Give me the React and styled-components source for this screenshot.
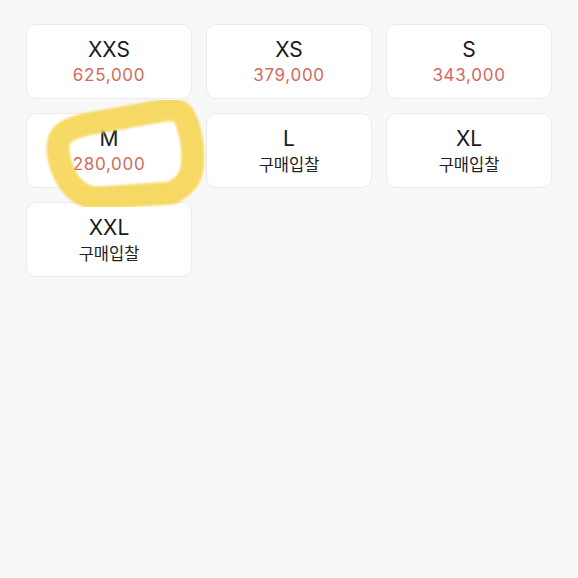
import React from "react";
import styled, { createGlobalStyle } from "styled-components";

const Global = createGlobalStyle`
  html, body { margin: 0; padding: 0; background: #f8f8f8; }
  body { font-family: Inter, "Noto Sans", "Noto Sans CJK KR", sans-serif; }
`;

const Page = styled.div`
  position: relative;
  width: 578px;
  height: 578px;
  box-sizing: border-box;
  padding: 24px 26px 0 26px;
  background: #f8f8f8;
`;

const Grid = styled.div`
  display: grid;
  grid-template-columns: repeat(3, 166px);
  grid-auto-rows: 75px;
  column-gap: 14px;
  row-gap: 14px;
`;

const Card = styled.div`
  box-sizing: border-box;
  background: #ffffff;
  border: 1px solid #ebebeb;
  border-radius: 10px;
  display: flex;
  flex-direction: column;
  align-items: center;
  justify-content: center;
  padding-top: 2px;
`;

const Size = styled.div`
  font-size: 21px;
  line-height: 26px;
  color: #1a1a1a;
`;

const Price = styled.div`
  line-height: 25px;
  color: ${(p) => (p.$bid ? "#222222" : "#d26a5d")};
  font-family: ${(p) => (p.$bid ? `"Noto Sans CJK KR", sans-serif` : `Inter, "Noto Sans", sans-serif`)};
  font-size: ${(p) => (p.$bid ? "16.5px" : "17px")};
  letter-spacing: ${(p) => (p.$bid ? "0" : "0.7px")};
`;

const Mark = styled.svg`
  position: absolute;
  left: 0;
  top: 0;
  pointer-events: none;
`;

const items = [
  { s: "XXS", p: "625,000" },
  { s: "XS", p: "379,000" },
  { s: "S", p: "343,000" },
  { s: "M", p: "280,000" },
  { s: "L", p: "구매입찰", bid: true },
  { s: "XL", p: "구매입찰", bid: true },
  { s: "XXL", p: "구매입찰", bid: true },
];

export default function App() {
  return (
    <Page>
      <Global />
      <Grid>
        {items.map((it) => (
          <Card key={it.s}>
            <Size>{it.s}</Size>
            <Price $bid={it.bid}>{it.p}</Price>
          </Card>
        ))}
      </Grid>
      <Mark width="578" height="578" viewBox="0 0 578 578">
        <defs>
          <filter id="soft" x="-10%" y="-10%" width="120%" height="120%">
            <feGaussianBlur stdDeviation="1.3" />
          </filter>
        </defs>
        <path
          d="M 58 150 C 57 134, 66 129, 88 124 L 160 111 C 175 108, 182 110, 186 120 C 191 133, 194 150, 192 168 C 190 180, 184 186, 172 193 L 100 198 C 80 199, 68 184, 62 168 C 60 162, 58 156, 58 150 Z"
          fill="none"
          stroke="#f6d44e"
          strokeOpacity="0.87"
          strokeWidth="23"
          strokeLinejoin="round"
          strokeLinecap="round"
          filter="url(#soft)"
        />
      </Mark>
    </Page>
  );
}
